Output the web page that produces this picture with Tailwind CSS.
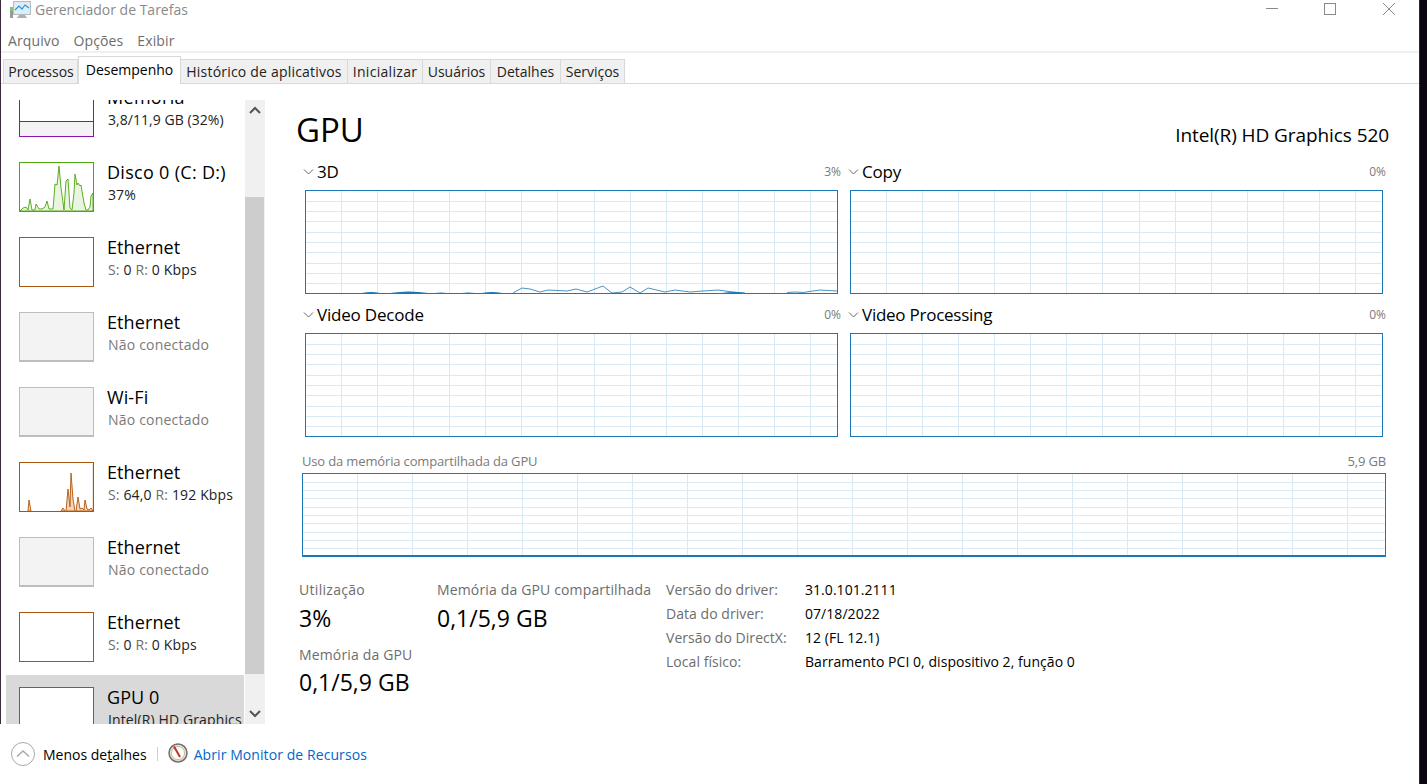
<!DOCTYPE html>
<html><head><meta charset="utf-8"><script src="https://cdn.jsdelivr.net/npm/@tailwindcss/browser@4"></script></head>
<body class="m-0 bg-white overflow-hidden">
<div class="flex w-[1427px] h-[784px] overflow-hidden bg-white text-black font-['Open_Sans','Noto_Sans',sans-serif]">
<div class="w-[1px] shrink-0 bg-[#3b2a3f]"></div>
<div class="w-[1418px] shrink-0 flex flex-col">
  <!-- title -->
  <div class="h-[27px] shrink-0 flex items-center relative">
    <svg class="ml-[9px] mt-[-8px]" width="22" height="18" viewBox="0 0 22 18"><rect x="3.500" y=".5" width="17" height="13" fill="#e6e9eb" stroke="#b4bcc0"/><rect x="5" y="2" width="14" height="10" fill="#d9effb"/><path d="M5 9l4-4 3 3 3-4 4 3" fill="none" stroke="#2f93d6" stroke-width="1.200"/><path d="M0 6h3v11H0z" fill="#9a9a9a"/><path d="M0 6h3v4H0z" fill="#7cc576"/><path d="M9 14h6l2 3H7z" fill="#aab2b6"/></svg>
    <span class="ml-[3px] mt-[-9px] text-[14px] text-[#8a8a8a]">Gerenciador de Tarefas</span>
    <div class="absolute left-[1265px] top-[8px] w-[12px] h-[1px] bg-[#8a8a8a]"></div>
    <div class="absolute left-[1323px] top-[3px] w-[12px] h-[12px] border border-[#8a8a8a]"></div>
    <svg class="absolute left-[1381px] top-[2px]" width="14" height="14" viewBox="0 0 14 14"><path d="M1 1l12 12M13 1L1 13" stroke="#8a8a8a" stroke-width="1"/></svg>
  </div>
  <!-- menu -->
  <div class="h-[24px] shrink-0 flex items-center pt-[2px] pl-[7px] gap-[14px] text-[14px] text-[#6d6d6d] tracking-[0.12px]"><span>Arquivo</span><span>Opções</span><span>Exibir</span></div>
  <div class="h-[2px] shrink-0 bg-[#f0f0f0]"></div>
  <!-- tabs -->
  <div class="h-[31px] shrink-0 border-b border-[#d9d9d9] flex items-end pl-[2px] text-[14px] text-[#222]">
    <div class="w-[75px] h-[25px] -mb-px flex items-center justify-center pl-px bg-[#f0f0f0] border border-[#d9d9d9]">Processos</div>
    <div class="w-[103px] h-[28px] -mb-px flex items-start pt-[2px] justify-center bg-white border border-b-0 border-[#d9d9d9] text-black">Desempenho</div>
    <div class="w-[167px] h-[25px] -mb-px flex items-center justify-center bg-[#f0f0f0] border border-l-0 border-[#d9d9d9] tracking-[0.2px] whitespace-nowrap">Histórico de aplicativos</div>
    <div class="w-[75px] h-[25px] -mb-px flex items-center justify-center bg-[#f0f0f0] border border-l-0 border-[#d9d9d9] tracking-[0.3px]">Inicializar</div>
    <div class="w-[68px] h-[25px] -mb-px flex items-center justify-center bg-[#f0f0f0] border border-l-0 border-[#d9d9d9]">Usuários</div>
    <div class="w-[70px] h-[25px] -mb-px flex items-center justify-center bg-[#f0f0f0] border border-l-0 border-[#d9d9d9]">Detalhes</div>
    <div class="w-[64px] h-[25px] -mb-px flex items-center justify-center bg-[#f0f0f0] border border-l-0 border-[#d9d9d9]">Serviços</div>
  </div>
  <!-- main -->
  <div class="flex-1 flex min-h-0">
    <div class="w-[5px] shrink-0"></div>
    <div class="w-[260px] shrink-0 flex flex-col">
      <div class="h-[16px] shrink-0"></div>
      <div class="h-[624px] shrink-0 flex overflow-hidden">
        <div class="w-[238px] shrink-0 overflow-hidden mr-[1px]">
          <div class="mt-[-25px]">
            <div class="h-[75px] flex pt-[12px] pl-[13px]"><div class="w-[75px] h-[50px] border border-[#8b12ae] relative shrink-0"><div class="absolute left-0 right-0 bottom-0 h-[15px] bg-[#f4f2f4] border-t border-[#8b12ae]"></div></div><div class="ml-[13px] mt-[-1px]"><div class="text-[18px] leading-[22px] tracking-[0.3px]">Memória</div><div class="ml-px mt-px text-[14px] leading-[22px] tracking-[0.05px] text-[#222]">3,8/11,9 GB (32%)</div></div></div>
            <div class="h-[75px] flex pt-[12px] pl-[13px]"><div class="w-[75px] h-[50px] border border-[#4da60c] shrink-0"><svg width="73" height="48" viewBox="0 0 73 48"><path d="M0 48 3 45 6 44 8 47 10 36 12 47 15 47 16 41 19 46 22 46 25 44 27 38 29 46 31 46 33 46 35 21 37 22 39 3 41 25 42 32 44 47 46 18 48 16 50 45 52 47 54 30 55 11 57 22 58 20 60 23 61 22 64 40 66 47 68 47 70 44 71 33 73 30V48Z" fill="#e9f4e1" stroke="#4da60c" stroke-opacity=".9"/></svg></div><div class="ml-[13px] mt-[-1px]"><div class="text-[18px] leading-[22px] tracking-[0.3px] whitespace-nowrap">Disco 0 (C: D:)</div><div class="ml-px mt-px text-[14px] leading-[22px] tracking-[0.1px] text-[#222]">37%</div></div></div>
            <div class="h-[75px] flex pt-[12px] pl-[13px]"><div class="w-[75px] h-[50px] border border-[#a7550f] shrink-0"></div><div class="ml-[13px] mt-[-1px]"><div class="text-[18px] leading-[22px] tracking-[0.1px]">Ethernet</div><div class="ml-px mt-px text-[14px] leading-[22px] tracking-[0.15px] text-[#222]"><span class="text-[#6d6d6d]">S:</span> 0 <span class="text-[#6d6d6d]">R:</span> 0 Kbps</div></div></div>
            <div class="h-[75px] flex pt-[12px] pl-[13px]"><div class="w-[75px] h-[50px] border border-[#bdbdbd] bg-[#f3f3f3] border-b-2 shrink-0"></div><div class="ml-[13px] mt-[-1px]"><div class="text-[18px] leading-[22px] tracking-[0.1px]">Ethernet</div><div class="ml-px mt-px text-[14px] leading-[22px] tracking-[0.2px] text-[#7a7a7a]">Não conectado</div></div></div>
            <div class="h-[75px] flex pt-[12px] pl-[13px]"><div class="w-[75px] h-[50px] border border-[#bdbdbd] bg-[#f3f3f3] border-b-2 shrink-0"></div><div class="ml-[13px] mt-[-1px]"><div class="text-[18px] leading-[22px] tracking-[0.1px]">Wi-Fi</div><div class="ml-px mt-px text-[14px] leading-[22px] tracking-[0.2px] text-[#7a7a7a]">Não conectado</div></div></div>
            <div class="h-[75px] flex pt-[12px] pl-[13px]"><div class="w-[75px] h-[50px] border border-[#a7550f] shrink-0"><svg width="73" height="48" viewBox="0 0 73 48"><path d="M73 1V48" stroke="#e6c3a5"/><path d="M8 48 9 37 11 48ZM41 48 43 45 45 48ZM46 48 48 26 50 44 51 10 53 36 55 48ZM56 48 58 34 60 46 62 45 64 47 65 37 67 46 69 47 71 45 73 48Z" fill="#f1d4bb" stroke="#b9621a" stroke-width="1"/></svg></div><div class="ml-[13px] mt-[-1px]"><div class="text-[18px] leading-[22px] tracking-[0.1px]">Ethernet</div><div class="ml-px mt-px text-[14px] leading-[22px] tracking-[0.15px] text-[#222] whitespace-nowrap"><span class="text-[#6d6d6d]">S:</span> 64,0 <span class="text-[#6d6d6d]">R:</span> 192 Kbps</div></div></div>
            <div class="h-[75px] flex pt-[12px] pl-[13px]"><div class="w-[75px] h-[50px] border border-[#bdbdbd] bg-[#f3f3f3] border-b-2 shrink-0"></div><div class="ml-[13px] mt-[-1px]"><div class="text-[18px] leading-[22px] tracking-[0.1px]">Ethernet</div><div class="ml-px mt-px text-[14px] leading-[22px] tracking-[0.2px] text-[#7a7a7a]">Não conectado</div></div></div>
            <div class="h-[75px] flex pt-[12px] pl-[13px]"><div class="w-[75px] h-[50px] border border-[#a7550f] shrink-0"></div><div class="ml-[13px] mt-[-1px]"><div class="text-[18px] leading-[22px] tracking-[0.1px]">Ethernet</div><div class="ml-px mt-px text-[14px] leading-[22px] tracking-[0.15px] text-[#222]"><span class="text-[#6d6d6d]">S:</span> 0 <span class="text-[#6d6d6d]">R:</span> 0 Kbps</div></div></div>
            <div class="h-[75px] flex pt-[12px] pl-[13px] bg-[#d9d9d9]"><div class="w-[75px] h-[50px] border border-[#1a78b8] bg-white shrink-0"></div><div class="ml-[13px] mt-[-1px] whitespace-nowrap"><div class="text-[18px] leading-[22px] tracking-[0.1px]">GPU 0</div><div class="ml-px mt-px text-[14px] leading-[22px] tracking-[0.12px] text-[#222]">Intel(R) HD Graphics 520</div></div></div>
          </div>
        </div>
        <div class="w-[20px] shrink-0 bg-[#f0f0f0] flex flex-col">
          <div class="h-[97px] flex justify-center pt-[6px]"><svg width="12" height="8" viewBox="0 0 12 8"><path d="M1 7l5-5 5 5" fill="none" stroke="#555" stroke-width="2"/></svg></div>
          <div class="h-[477px] bg-[#cdcdcd] w-[19px]"></div>
          <div class="flex-1 flex justify-center items-end pb-[6px]"><svg width="12" height="8" viewBox="0 0 12 8"><path d="M1 1l5 5 5-5" fill="none" stroke="#555" stroke-width="2"/></svg></div>
        </div>
      </div>
      <div class="flex-1"></div>
    </div>
    <!-- content -->
    <div class="flex-1 pl-[36px] pr-[32px] relative min-w-0">
      <div class="flex justify-between items-end h-[62px] ml-[-6px]">
        <span class="text-[33px] leading-[60px] mb-[-14px]">GPU</span>
        <span class="text-[19px] leading-[24px] mb-[-1px] mr-[-2px] whitespace-nowrap tracking-[-0.08px]">Intel(R) HD Graphics 520</span>
      </div>
      <div class="grid grid-cols-[533px_533px] gap-x-[12px] mt-[14px] ml-[3px]">
        <div>
          <div class="h-[30px] pb-[6px] flex justify-between items-center ml-[-2px] mr-[-3px]"><div class="flex items-center"><svg width="11" height="6" viewBox="0 0 11 6"><path d="M1 .5l4.500 4.500L10 .5" fill="none" stroke="#666"/></svg><span class="ml-[3px] text-[17px] tracking-[-0.2px]">3D</span></div><span class="text-[12px] text-[#7a7a7a]">3%</span></div>
          <div class="h-[104px] border border-[#1a78b8] overflow-hidden">
            <svg class="block" width="531" height="102"><path id="gridlines" d="M35.500 0V102M71.500 0V102M107.500 0V102M143.500 0V102M179.500 0V102M215.500 0V102M251.500 0V102M288.500 0V102M324.500 0V102M360.500 0V102M396.500 0V102M432.500 0V102M468.500 0V102M504.500 0V102M0 10.500H531M0 20.500H531M0 30.500H531M0 41.500H531M0 51.500H531M0 61.500H531M0 72.500H531M0 82.500H531M0 92.500H531" stroke="#d9eaf4" fill="none"/><path d="M207 102 216 97 224 98 234 101 242 99 261 100 270 98 281 101 297 95 306 102 316 101 324 96 334 102 342 97 359 101 369 99 384 101 397 100 412 99 427 101 439 102M481 101.500 489 101 497 101.500 514 99 531 100" fill="none" stroke="#1a78b8" stroke-opacity=".8"/><path d="M56 102Q65 100 74 102ZM84 102Q103 99 122 102ZM129 102Q135 101 141 102ZM156 102Q162 101 169 102ZM176 102Q186 100 196 102ZM416 102Q428 100 439 102Z" fill="#1a78b8"/></svg>
          </div>
        </div>
        <div>
          <div class="h-[30px] pb-[6px] flex justify-between items-center ml-[-2px] mr-[-3px]"><div class="flex items-center"><svg width="11" height="6" viewBox="0 0 11 6"><path d="M1 .5l4.500 4.500L10 .5" fill="none" stroke="#666"/></svg><span class="ml-[3px] text-[17px] tracking-[-0.2px]">Copy</span></div><span class="text-[12px] text-[#7a7a7a]">0%</span></div>
          <div class="h-[104px] border border-[#1a78b8] overflow-hidden"><svg class="block" width="531" height="102"><use href="#gridlines"/></svg></div>
        </div>
        <div class="mt-[9px]">
          <div class="h-[30px] pb-[6px] flex justify-between items-center ml-[-2px] mr-[-3px]"><div class="flex items-center"><svg width="11" height="6" viewBox="0 0 11 6"><path d="M1 .5l4.500 4.500L10 .5" fill="none" stroke="#666"/></svg><span class="ml-[3px] text-[17px] tracking-[-0.2px]">Video Decode</span></div><span class="text-[12px] text-[#7a7a7a]">0%</span></div>
          <div class="h-[104px] border border-[#1a78b8] overflow-hidden"><svg class="block" width="531" height="102"><use href="#gridlines"/></svg></div>
        </div>
        <div class="mt-[9px]">
          <div class="h-[30px] pb-[6px] flex justify-between items-center ml-[-2px] mr-[-3px]"><div class="flex items-center"><svg width="11" height="6" viewBox="0 0 11 6"><path d="M1 .5l4.500 4.500L10 .5" fill="none" stroke="#666"/></svg><span class="ml-[3px] text-[17px] tracking-[-0.25px]">Video Processing</span></div><span class="text-[12px] text-[#7a7a7a]">0%</span></div>
          <div class="h-[104px] border border-[#1a78b8] overflow-hidden"><svg class="block" width="531" height="102"><use href="#gridlines"/></svg></div>
        </div>
      </div>
      <div class="w-[1084px] mt-[14px]">
        <div class="h-[22px] flex justify-between items-center text-[13px] text-[#7a7a7a] tracking-[-0.15px]"><span>Uso da memória compartilhada da GPU</span><span>5,9 GB</span></div>
        <div class="h-[84px] border border-[#1a78b8] border-b-2 overflow-hidden"><svg class="block" width="1082" height="81"><path d="M54.500 0V81M109.500 0V81M164.500 0V81M219.500 0V81M274.500 0V81M329.500 0V81M384.500 0V81M439.500 0V81M494.500 0V81M549.500 0V81M604.500 0V81M659.500 0V81M714.500 0V81M769.500 0V81M824.500 0V81M879.500 0V81M934.500 0V81M989.500 0V81M1044.500 0V81M0 8.500H1082M0 16.500H1082M0 24.500H1082M0 33.500H1082M0 41.500H1082M0 49.500H1082M0 58.500H1082M0 66.500H1082M0 74.500H1082" stroke="#d9eaf4" fill="none"/></svg></div>
      </div>
      <div class="flex mt-[23px] ml-[-3px]">
        <div class="w-[138px]">
          <div class="text-[14px] leading-[20px] tracking-[0.3px] text-[#6d6d6d]">Utilização</div>
          <div class="text-[23px] leading-[36px]">3%</div>
          <div class="text-[14px] leading-[20px] tracking-[0.15px] text-[#6d6d6d] mt-[9px]">Memória da GPU</div>
          <div class="text-[23px] leading-[36px] mt-[-1px]">0,1/5,9 GB</div>
        </div>
        <div class="w-[229px]">
          <div class="text-[14px] leading-[20px] tracking-[0.15px] text-[#6d6d6d] whitespace-nowrap">Memória da GPU compartilhada</div>
          <div class="text-[23px] leading-[36px]">0,1/5,9 GB</div>
        </div>
        <div class="grid grid-cols-[139px_auto] auto-rows-[24px] text-[14px] leading-[20px] tracking-[0.05px]">
          <span class="text-[#6d6d6d]">Versão do driver:</span><span>31.0.101.2111</span>
          <span class="text-[#6d6d6d]">Data do driver:</span><span>07/18/2022</span>
          <span class="text-[#6d6d6d]">Versão do DirectX:</span><span>12 (FL 12.1)</span>
          <span class="text-[#6d6d6d]">Local físico:</span><span>Barramento PCI 0, dispositivo 2, função 0</span>
        </div>
      </div>
    </div>
  </div>
  <!-- footer -->
  <div class="absolute left-0 top-[724px] w-[1418px] h-[60px] bg-white flex items-center pl-[11px] text-[14px]">
    <svg width="24" height="24" viewBox="0 0 24 24" class="shrink-0"><circle cx="12" cy="12" r="11.500" fill="#fff" stroke="#a8a8a8"/><path d="M6 14.500l6-5.500 6 5.500" fill="none" stroke="#a8a8a8" stroke-width="1.500"/></svg>
    <span class="ml-[8px]">Menos de<span class="underline">t</span>alhes</span>
    <div class="w-px h-[14px] bg-[#cfcfcf] ml-[10px]"></div>
    <svg class="ml-[10px] mt-[-2px]" width="20" height="20" viewBox="0 0 20 20"><circle cx="10" cy="10" r="9" fill="#e8dfd0" stroke="#6f6f6f" stroke-width="1.500"/><circle cx="10" cy="10" r="6.500" fill="#fff" stroke="#c9b9a5"/><path d="M6 3.500l6 10.500" stroke="#c62f1e" stroke-width="2"/></svg>
    <span class="ml-[6px] tracking-[0.08px] text-[#0066cc]">Abrir Monitor de Recursos</span>
  </div>
</div>
<div class="w-[8px] shrink-0 bg-[#0b0610] border-l border-[#2a2a2e]"></div>
</div>
</body></html>
